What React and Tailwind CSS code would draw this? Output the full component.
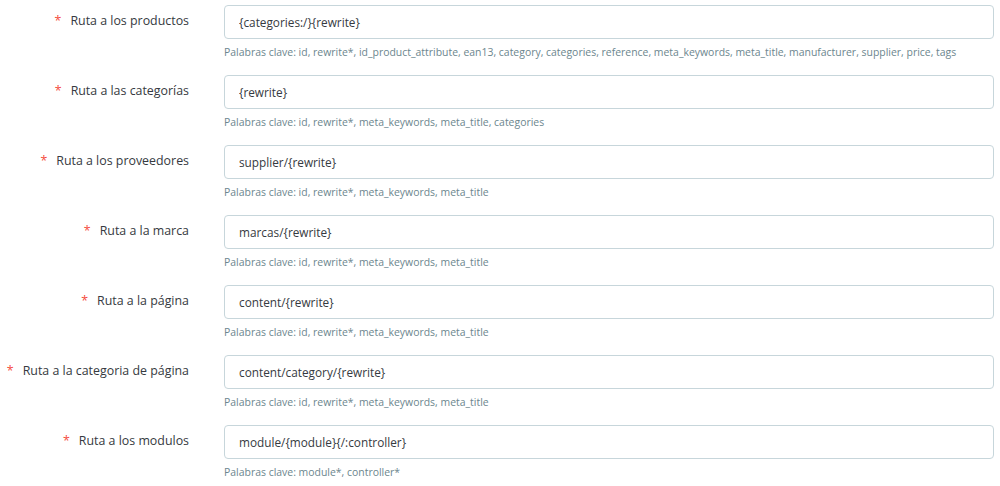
const rows = [
  {
    label: 'Ruta a los productos',
    value: '{categories:/}{rewrite}',
    help: 'Palabras clave: id, rewrite*, id_product_attribute, ean13, category, categories, reference, meta_keywords, meta_title, manufacturer, supplier, price, tags',
  },
  {
    label: 'Ruta a las categorías',
    value: '{rewrite}',
    help: 'Palabras clave: id, rewrite*, meta_keywords, meta_title, categories',
  },
  {
    label: 'Ruta a los proveedores',
    value: 'supplier/{rewrite}',
    help: 'Palabras clave: id, rewrite*, meta_keywords, meta_title',
  },
  {
    label: 'Ruta a la marca',
    value: 'marcas/{rewrite}',
    help: 'Palabras clave: id, rewrite*, meta_keywords, meta_title',
  },
  {
    label: 'Ruta a la página',
    value: 'content/{rewrite}',
    help: 'Palabras clave: id, rewrite*, meta_keywords, meta_title',
  },
  {
    label: 'Ruta a la categoria de página',
    value: 'content/category/{rewrite}',
    help: 'Palabras clave: id, rewrite*, meta_keywords, meta_title',
  },
  {
    label: 'Ruta a los modulos',
    value: 'module/{module}{/:controller}',
    help: 'Palabras clave: module*, controller*',
  },
];

function RouteRow({ label, value, help }) {
  return (
    <div className="flex h-[70px]">
      <div className="w-[189px] shrink-0 whitespace-nowrap pt-[12px] text-right text-[12.4px] text-[#363a41]">
        <span className="mr-[9px] text-[#f54c3e]">*</span>
        {label}
      </div>
      <div className="ml-[35px] mr-[6px] flex-1">
        <input
          readOnly
          value={value}
          className="mt-[5px] block h-[34px] w-full rounded-[4px] border border-[#c7d6db] bg-white px-[14px] text-[11.8px] text-[#363a41] outline-none"
        />
        <p className="mt-[5px] text-[10.45px] leading-[16px] text-[#6c868e]">{help}</p>
      </div>
    </div>
  );
}

export default function App() {
  return (
    <div className="min-h-screen bg-white" style={{ fontFamily: '"Open Sans", "Liberation Sans", sans-serif' }}>
      {rows.map((r) => (
        <RouteRow key={r.label} {...r} />
      ))}
    </div>
  );
}
